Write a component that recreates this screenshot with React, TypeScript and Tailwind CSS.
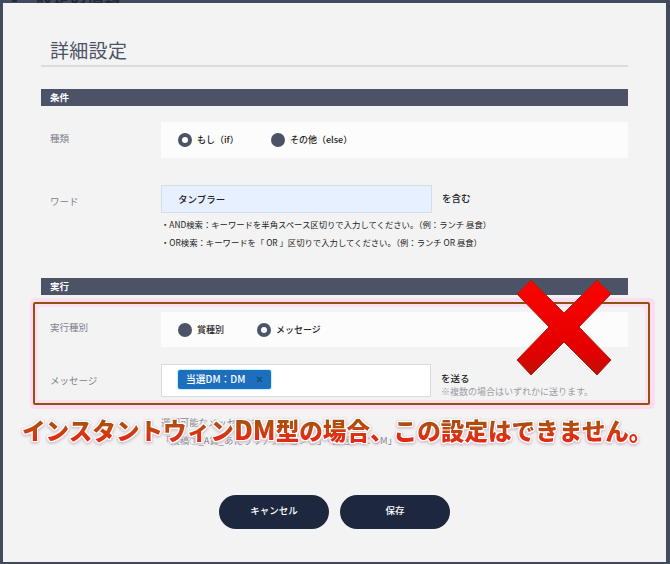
import type { ReactNode } from 'react';

function SectionBar({ children }: { children: ReactNode }) {
    return (
        <div className="h-[17px] bg-[#4c5366] pl-[9px] text-[9.5px] leading-[16px] font-bold text-white">
            {children}
        </div>
    );
}

function Radio({ checked, label, className }: { checked?: boolean; label: string; className?: string }) {
    return (
        <label className={`flex items-center gap-[5px] whitespace-nowrap ${className ?? ''}`}>
            <span className="flex h-[14px] w-[14px] items-center justify-center rounded-full bg-[#4c5366]">
                {checked && <span className="h-[6px] w-[6px] rounded-full bg-white" />}
            </span>
            <span className="text-[9px] font-medium text-[#222]">{label}</span>
        </label>
    );
}

function Label({ children }: { children: ReactNode }) {
    return <div className="w-[120px] shrink-0 pl-[9px] text-[9.5px] leading-[14px] text-[#7c7f8c]">{children}</div>;
}

function RoundButton({ children }: { children: ReactNode }) {
    return (
        <button className="h-[34px] w-[110px] rounded-full bg-[#1d283e] pb-[3px] text-[9.5px] font-medium text-white">
            {children}
        </button>
    );
}

function Cross() {
    return (
        <svg className="absolute top-[278px] left-[514px]" width="100" height="98" viewBox="0 0 100 98">
            <defs>
                <linearGradient id="cross" x1="0" y1="0" x2="0" y2="1">
                    <stop offset="0" stopColor="#fb0400" />
                    <stop offset="0.75" stopColor="#e30000" />
                    <stop offset="1" stopColor="#c01008" />
                </linearGradient>
            </defs>
            <path
                d="M17 2 50 35 83 2 97 16 65 49 97 82 83 97 50 64 17 97 3 82 35 49 3 16Z"
                fill="url(#cross)"
                stroke="#a22414"
                strokeWidth="1"
            />
        </svg>
    );
}

export default function App() {
    return (
        <div className="relative h-[564px] w-[670px] overflow-hidden bg-[#424a5d] pt-[3px] pl-[3px] font-['Noto_Sans_CJK_JP',sans-serif]">
            <div className="absolute top-[-12px] left-[36px] text-[17px] leading-[17px] font-bold text-[#222a39]">
                設定の情報
            </div>
            <div className="absolute top-0 left-[12px] h-[2px] w-[5px] bg-[#222a39]" />

            <div className="relative h-[559px] w-[663px] bg-[#f3f3f3] pr-[38px] pl-[38px]">
                <h1 className="h-[64px] border-b-2 border-[#dcdcdd] pt-[32px] pl-[9px] text-[19px] leading-[30px] font-normal tracking-[0.3px] text-[#4c5366]">
                    詳細設定
                </h1>

                <div className="pt-[22px]">
                    <SectionBar>条件</SectionBar>
                </div>
                <div className="flex pt-[16px]">
                    <Label>
                        <div className="pt-[9px]">種類</div>
                    </Label>
                    <div className="flex h-[36px] flex-1 items-center bg-[#fcfcfc] pl-[17px]">
                        <Radio checked label="もし（if）" className="w-[93px]" />
                        <Radio label="その他（else）" />
                    </div>
                </div>

                <div className="flex pt-[27px]">
                    <Label>
                        <div className="pt-[9px]">ワード</div>
                    </Label>
                    <div className="h-[28px] w-[271px] border border-[#d3dfe5] bg-[#e7f0fe] pl-[16px] text-[9.5px] leading-[26px] font-medium text-[#222]">
                        タンブラー
                    </div>
                    <div className="pl-[10px] text-[9.5px] leading-[26px] font-medium text-[#222]">を含む</div>
                </div>
                <div className="ml-[120px] pt-[3px] text-[8.35px] leading-[17.5px] whitespace-nowrap text-[#222]">
                    <p>・AND検索：キーワードを半角スペース区切りで入力してください。（例：ランチ 昼食）</p>
                    <p>・OR検索：キーワードを「 OR 」区切りで入力してください。（例：ランチ OR 昼食）</p>
                </div>

                <div className="pt-[27px]">
                    <SectionBar>実行</SectionBar>
                </div>
                <div className="flex pt-[17px]">
                    <Label>
                        <div className="pt-[8px]">実行種別</div>
                    </Label>
                    <div className="flex h-[35px] flex-1 items-center bg-[#fcfcfc] pl-[17px]">
                        <Radio label="賞種別" className="w-[79px]" />
                        <Radio checked label="メッセージ" />
                    </div>
                </div>

                <div className="flex pt-[17px]">
                    <Label>
                        <div className="pt-[9px]">メッセージ</div>
                    </Label>
                    <div className="flex h-[33px] w-[270px] items-start border border-[#dcdcdf] bg-white pt-[5px] pl-[16px]">
                        <div className="flex h-[19px] w-[93px] items-center rounded-[2px] bg-[#1d6fbd] pl-[8px] text-[9.8px] font-medium text-white shadow-[0_0_1px_1px_#bdf3fc]">
                            <span className="w-[70px] whitespace-nowrap">当選DM：DM</span>
                            <svg width="7" height="7" viewBox="0 0 7 7" stroke="#174a70" strokeWidth="1.1">
                                <path d="M1 1 6 6M6 1 1 6" />
                            </svg>
                        </div>
                    </div>
                    <div className="pt-[8px] pl-[10px] whitespace-nowrap">
                        <p className="text-[9.5px] leading-[13px] font-medium text-[#222]">を送る</p>
                        <p className="text-[9px] leading-[13px] text-[#9b9ca4]">※複数の場合はいずれかに送ります。</p>
                    </div>
                </div>
                <div className="ml-[120px] h-[97px] pt-[15px] text-[9.4px] leading-[18px] whitespace-nowrap text-[#858791]">
                    <p>選択可能なメッセージ</p>
                    <p>「投稿①_A賞_あたりリアクション①」「当選DM：DM」</p>
                </div>

                <div className="flex gap-[11px] pl-[178px]">
                    <RoundButton>キャンセル</RoundButton>
                    <RoundButton>保存</RoundButton>
                </div>
            </div>

            <div className="absolute top-[302px] left-[33px] h-[103px] w-[617px] rounded-[2px] border-[2.5px] border-[#95500f] shadow-[1px_0_1px_4px_#fbdcf0,inset_0_0_1px_3px_#fbe0f1]" />
            <Cross />
            <div className="absolute top-[411px] left-[22px] bg-linear-to-b from-[#a8500f] from-30% to-[#e02c12] to-70% bg-clip-text text-[23.6px] leading-[36px] font-black whitespace-nowrap text-transparent [filter:drop-shadow(1px_0_0_#fff)_drop-shadow(-1px_0_0_#fff)_drop-shadow(0_1px_0_#fff)_drop-shadow(0_-1px_0_#fff)_drop-shadow(0_0_1px_#fbe3ee)_drop-shadow(0_1px_1px_#c5aeb8)]">
                インスタントウィン<span className="text-[26px]">DM</span>型の場合、この設定はできません。
            </div>
        </div>
    );
}
